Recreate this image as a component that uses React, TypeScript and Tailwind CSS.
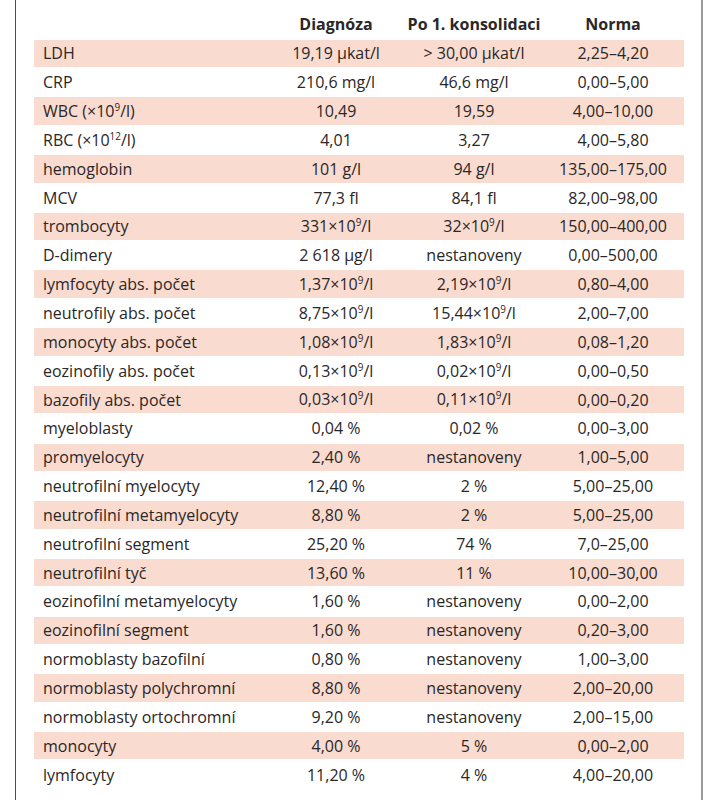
import React from "react";

type Cell = React.ReactNode;

const Sup = ({ children }: { children: React.ReactNode }) => (
  <span className="align-super text-[0.62em] leading-none">{children}</span>
);

const x9 = (v: string) => (
  <>
    {v}×10<Sup>9</Sup>/l
  </>
);

const rows: [Cell, Cell, Cell, Cell][] = [
  ["LDH", "19,19 µkat/l", "> 30,00 µkat/l", "2,25–4,20"],
  ["CRP", "210,6 mg/l", "46,6 mg/l", "0,00–5,00"],
  [<>WBC (×10<Sup>9</Sup>/l)</>, "10,49", "19,59", "4,00–10,00"],
  [<>RBC (×10<Sup>12</Sup>/l)</>, "4,01", "3,27", "4,00–5,80"],
  ["hemoglobin", "101 g/l", "94 g/l", "135,00–175,00"],
  ["MCV", "77,3 fl", "84,1 fl", "82,00–98,00"],
  ["trombocyty", x9("331"), x9("32"), "150,00–400,00"],
  ["D-dimery", "2 618 µg/l", "nestanoveny", "0,00–500,00"],
  ["lymfocyty abs. počet", x9("1,37"), x9("2,19"), "0,80–4,00"],
  ["neutrofily abs. počet", x9("8,75"), x9("15,44"), "2,00–7,00"],
  ["monocyty abs. počet", x9("1,08"), x9("1,83"), "0,08–1,20"],
  ["eozinofily abs. počet", x9("0,13"), x9("0,02"), "0,00–0,50"],
  ["bazofily abs. počet", x9("0,03"), x9("0,11"), "0,00–0,20"],
  ["myeloblasty", "0,04 %", "0,02 %", "0,00–3,00"],
  ["promyelocyty", "2,40 %", "nestanoveny", "1,00–5,00"],
  ["neutrofilní myelocyty", "12,40 %", "2 %", "5,00–25,00"],
  ["neutrofilní metamyelocyty", "8,80 %", "2 %", "5,00–25,00"],
  ["neutrofilní segment", "25,20 %", "74 %", "7,0–25,00"],
  ["neutrofilní tyč", "13,60 %", "11 %", "10,00–30,00"],
  ["eozinofilní metamyelocyty", "1,60 %", "nestanoveny", "0,00–2,00"],
  ["eozinofilní segment", "1,60 %", "nestanoveny", "0,20–3,00"],
  ["normoblasty bazofilní", "0,80 %", "nestanoveny", "1,00–3,00"],
  ["normoblasty polychromní", "8,80 %", "nestanoveny", "2,00–20,00"],
  ["normoblasty ortochromní", "9,20 %", "nestanoveny", "2,00–15,00"],
  ["monocyty", "4,00 %", "5 %", "0,00–2,00"],
  ["lymfocyty", "11,20 %", "4 %", "4,00–20,00"],
];

export default function App() {
  return (
    <div
      className="w-[714px] h-[800px] bg-white text-[#2a2727] text-[16px] overflow-hidden"
      style={{ fontFamily: '"Open Sans", "Noto Sans", sans-serif' }}
    >
      <div className="ml-[15px] w-[688px] h-[800px] border-l border-l-[#4d4d4d] border-r-2 border-r-[#9b9b9b] pl-[18px]">
        <div className="w-[650px]">
          <div className="grid grid-cols-[240px_124px_152px_126px] h-[39px] pt-[10px] leading-[29px] font-bold">
            <div />
            <div className="text-center">Diagnóza</div>
            <div className="text-center">Po 1. konsolidaci</div>
            <div className="text-center">Norma</div>
          </div>
          {rows.map((r, i) => (
            <div key={i} className="h-[28.85px] py-[0.7px]">
              <div
                className={`grid grid-cols-[240px_124px_152px_126px] h-full items-center leading-none ${
                  i % 2 === 0 ? "bg-[#fadbd0]" : "bg-white"
                }`}
              >
                <div className="pl-[9px] whitespace-nowrap">{r[0]}</div>
                <div className="text-center whitespace-nowrap">{r[1]}</div>
                <div className="text-center whitespace-nowrap">{r[2]}</div>
                <div className="text-center whitespace-nowrap">{r[3]}</div>
              </div>
            </div>
          ))}
        </div>
      </div>
    </div>
  );
}
